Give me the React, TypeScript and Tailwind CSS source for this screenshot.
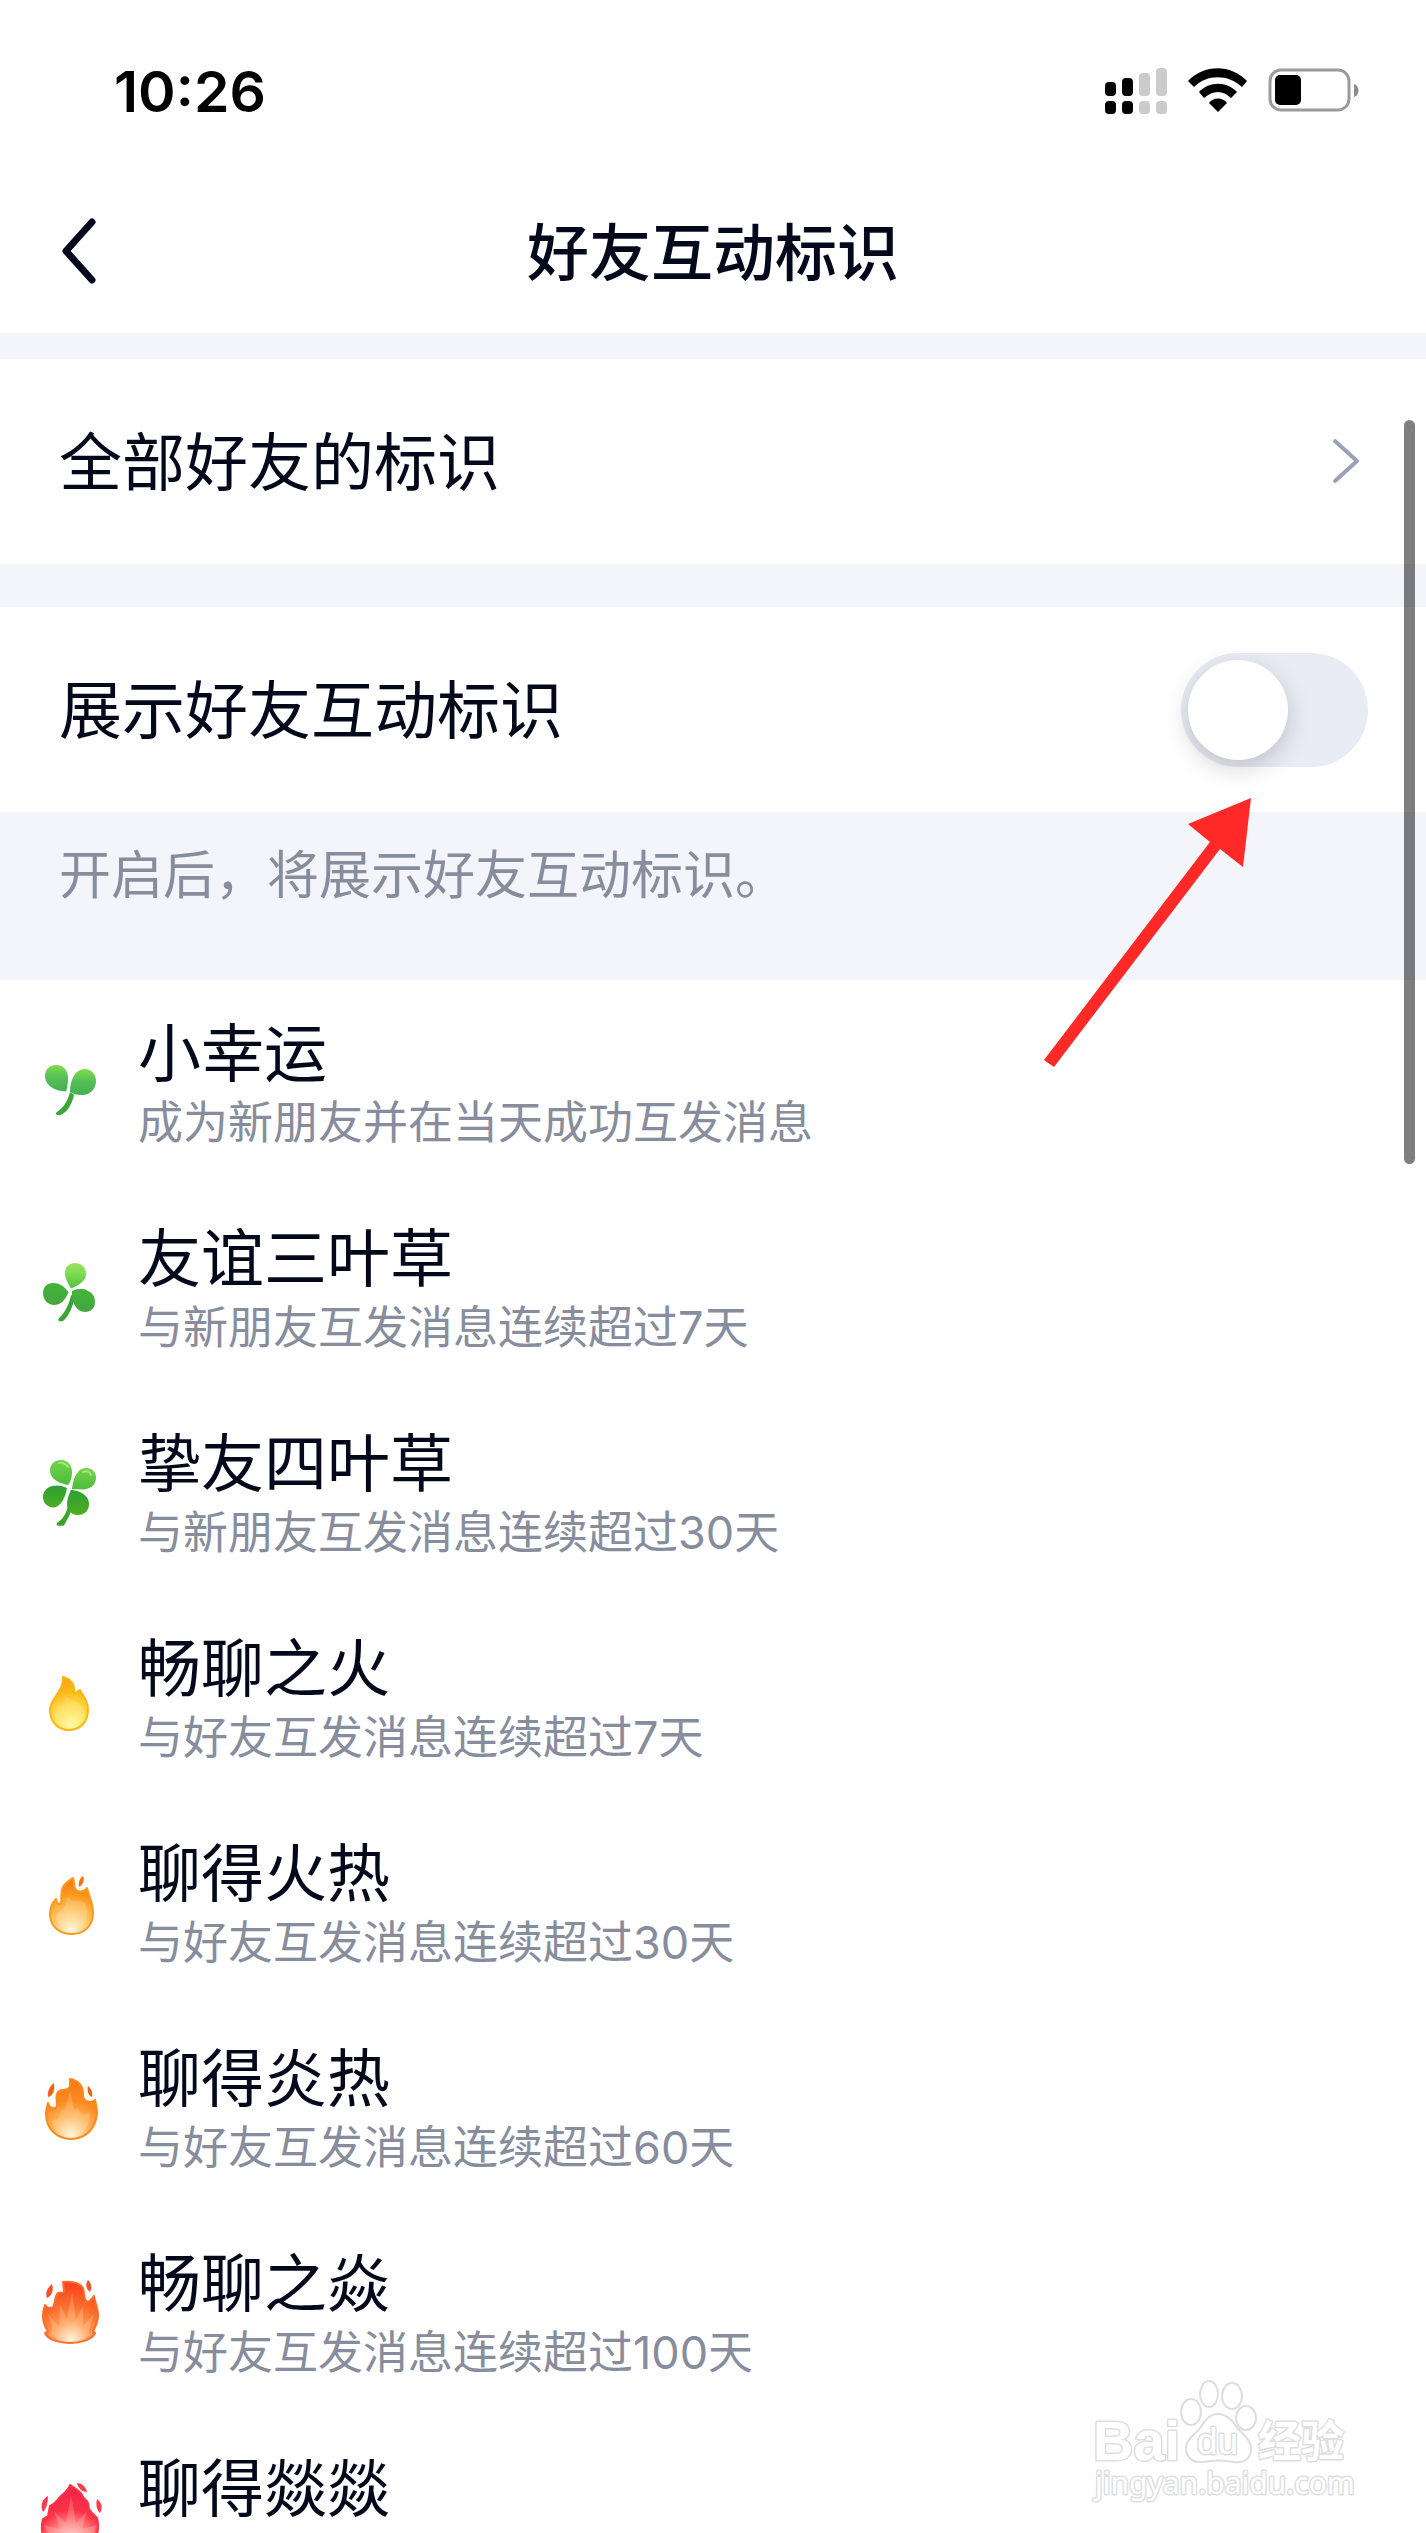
import { useState } from "react"
import type { ReactNode } from "react"

interface Badge {
  id: string
  name: string
  description?: string
  icon: ReactNode
}

function SproutIcon() {
  return (
    <svg viewBox="0 0 80 80" className="size-20" aria-hidden="true">
      <defs>
        <linearGradient id="sprout" x1="0" y1="0" x2="0" y2="1">
          <stop offset="0" stopColor="#7fdc4a" />
          <stop offset="0.5" stopColor="#55be58" />
          <stop offset="1" stopColor="#43b04f" />
        </linearGradient>
      </defs>
      <path d="M40 52C38 61 33 68 27 72C25 73 26 76 30 75C37 73 42 64 44 55Z" fill="#3da535" />
      <path d="M36 51.500C24 51 15 45 15 36C15 29 20 25 26 25C34 25 38 31 38 38C38 43 37.500 47 36 51.500Z" fill="url(#sprout)" />
      <path d="M40 52C40 40 45 29 55 29C61 29 66 34 66 41C66 49 60 55 52 55C47 55 43 54 40 52Z" fill="url(#sprout)" />
    </svg>
  )
}

function ThreeLeafIcon() {
  return (
    <svg viewBox="0 0 80 80" className="size-20" aria-hidden="true">
      <defs>
        <linearGradient id="leafTop" x1="0" y1="0" x2="0" y2="1">
          <stop offset="0" stopColor="#9be267" />
          <stop offset="0.400" stopColor="#7fdc50" />
          <stop offset="1" stopColor="#53c03e" />
        </linearGradient>
        <linearGradient id="leafSide" x1="0" y1="0" x2="0" y2="1">
          <stop offset="0" stopColor="#43b53a" />
          <stop offset="1" stopColor="#44a63e" />
        </linearGradient>
      </defs>
      <path d="M41 50C39 60 34 69 29 73C27 76 30 77 33 76C39 71 43 61 45 52Z" fill="#3da535" />
      <path d="M41 43.500C37 37 35 33 35 28C35 22 39 18 45 18C52 18 56 23 56 29C56 36 49 40 41 43.500Z" fill="url(#leafTop)" />
      <path d="M38.500 47C34 41 29 38 23 38C17 38 13 42 13 48C13 55 18 60 24 60C31 60 36 54 38.500 47Z" fill="url(#leafSide)" />
      <path d="M42 46C49 43 54 43 58 46C63 48 65 52 65 57C65 63 61 67 55 67C47 67 41 58 42 46Z" fill="url(#leafSide)" />
    </svg>
  )
}

function FourLeafIcon() {
  return (
    <svg viewBox="0 0 80 80" className="size-20" aria-hidden="true">
      <defs>
        <linearGradient id="cloverLight" x1="0" y1="0" x2="0" y2="1">
          <stop offset="0" stopColor="#74d24a" />
          <stop offset="1" stopColor="#4dbd3b" />
        </linearGradient>
        <linearGradient id="cloverDark" x1="0" y1="0" x2="0" y2="1">
          <stop offset="0" stopColor="#2c9f35" />
          <stop offset="1" stopColor="#4cae1f" />
        </linearGradient>
      </defs>
      <path d="M39 50C38 62 33 69 27 73C25 76 30 76 34 75.500C38 68 42 62 43 52Z" fill="#3aa528" />
      <path d="M38 35C27 33 20 28 20 20C20 14 25 10 31 10C38 10 42 16 42 22C42 27 41 31 38 35Z" fill="url(#cloverLight)" />
      <path d="M42 39C43 27 48 18 56 18C62 18 66 22 66 28C66 35 60 39 53 39.500Z" fill="url(#cloverLight)" />
      <path d="M37 38C31 35 27 35 22 36C16 38 13 42 13 47C13 53 17 57 23 57.500C31 57 35 48 37 38Z" fill="url(#cloverDark)" />
      <path d="M41 40C47 40 59 44 59 54C59 61 54 65 48 65C41 65 37 60 37 54C37 49 39 44 41 40Z" fill="url(#cloverDark)" />
      <path d="M29 13C33 12 36 14 38 17" stroke="#a6e77d" strokeWidth="2" strokeLinecap="round" fill="none" />
      <path d="M53 22C57 20 60 22 61 25" stroke="#a6e77d" strokeWidth="2" strokeLinecap="round" fill="none" />
    </svg>
  )
}

interface FlameIconProps {
  id: string
  body: string
  sparks?: string
  sparkColor?: string
  rays?: string
  core: string
  mid: string
  edge: string
  top: string
}

function FlameIcon({ id, body, sparks, sparkColor, rays, core, mid, edge, top }: FlameIconProps) {
  return (
    <svg viewBox="0 0 80 80" className="size-20" aria-hidden="true">
      <defs>
        <radialGradient id={`${id}-fill`} gradientUnits="userSpaceOnUse" cx="41" cy="70" r="54">
          <stop offset="0" stopColor={core} />
          <stop offset="0.350" stopColor={mid} />
          <stop offset="0.650" stopColor={edge} />
          <stop offset="1" stopColor={top} />
        </radialGradient>
      </defs>
      <path d={body} fill={`url(#${id}-fill)`} stroke={edge} strokeWidth="2" strokeLinejoin="round" />
      {rays && <path d={rays} fill={core} opacity="0.200" />}
      {sparks && <path d={sparks} fill={sparkColor} />}
    </svg>
  )
}

const badges: Badge[] = [
  { id: "luck", name: "小幸运", description: "成为新朋友并在当天成功互发消息", icon: <SproutIcon /> },
  { id: "clover3", name: "友谊三叶草", description: "与新朋友互发消息连续超过7天", icon: <ThreeLeafIcon /> },
  { id: "clover4", name: "挚友四叶草", description: "与新朋友互发消息连续超过30天", icon: <FourLeafIcon /> },
  {
    id: "fire1",
    name: "畅聊之火",
    description: "与好友互发消息连续超过7天",
    icon: (
      <FlameIcon
        id="fire1"
        body="M33 22C41 24 45 29 44 38C46 38 48 36 50 35C52 40 58 44 58 55C58 67 50 75 39 75C28 75 20 67 20 55C20 43 34 37 33 22Z"
        rays="M25 56C29 48 36 48 36 40C40 48 50 43 53 55C54 65 48 72 39 72C30 72 24 65 25 56Z"
        core="#fff9a6"
        mid="#ffdc52"
        edge="#fdb515"
        top="#fb9d12"
      />
    ),
  },
  {
    id: "fire2",
    name: "聊得火热",
    description: "与好友互发消息连续超过30天",
    icon: (
      <FlameIcon
        id="fire2"
        body="M26 39C26 42 28 45 31 44C32 40 30 34 33 27C36 22 40 20 43 18C45 22 43 27 46 30C50 33 55 31 57 28C58 34 63 41 63 53C63 66 54 74 42 74C29 74 20 66 20 54C20 48 22 43 26 39Z"
        sparks="M53 16C55 20 53 25 49 27C48 22 50 18 53 16Z"
        rays="M26 56C32 50 36 46 38 36C41 44 47 40 54 42C60 51 57 70 42 71C32 71 26 64 26 56Z"
        sparkColor="#f7701a"
        core="#fff6d6"
        mid="#ffc766"
        edge="#fb9a1e"
        top="#f66f10"
      />
    ),
  },
  {
    id: "fire3",
    name: "聊得炎热",
    description: "与好友互发消息连续超过60天",
    icon: (
      <FlameIcon
        id="fire3"
        body="M18 38C19 42 22 44 26 43C29 37 24 32 28 27C32 23 38 27 40 21L40 14C48 15 53 21 53 28C52 34 56 37 60 37C63 37 64 36 65 35C66 39 67 43 67 48C66 64 55 74 41 74C27 74 16 64 16 49C16 44 17 41 18 38Z"
        sparks="M24 18C25 25 23 31 18 32C17 26 20 21 24 18ZM58 21C62 24 63 29 62 32C58 30 57 26 58 21Z"
        rays="M22 56C26 54 30 56 31 44C35 50 37 36 40 26C44 38 42 50 48 42C50 52 58 50 60 46C60 64 52 71 41 71C31 71 24 65 22 56Z"
        sparkColor="#f1601a"
        core="#fff6dc"
        mid="#ffb45c"
        edge="#fb8a1d"
        top="#f87a17"
      />
    ),
  },
  {
    id: "fire4",
    name: "畅聊之焱",
    description: "与好友互发消息连续超过100天",
    icon: (
      <FlameIcon
        id="fire4"
        body="M15 35C17 38 20 39 23 37C26 33 24 27 28 23C30 22 34 24 34 21L33 12C42 11 49 12 53 18C55 23 53 29 57 32C61 32 62 28 64 26C65 33 68 38 68 45C68 52 66 56 63 61L65 63C62 70 50 73 40 73C30 73 18 70 15 63L18 61C14 56 13 51 13 46C13 41 14 38 15 35Z"
        sparks="M22 14C24 20 22 26 17 28C15 23 17 18 22 14ZM58 10C62 14 62 18 60 22C56 19 55 14 58 10Z"
        rays="M20 65C25 58 19 50 18 44L29 56L30 34L37 50L42 22L46 50L53 36L53 56L64 44C62 52 58 60 60 65C50 72 30 72 20 65Z"
        sparkColor="#f4532d"
        core="#fff5e0"
        mid="#ff9a52"
        edge="#fb6d2c"
        top="#f9461c"
      />
    ),
  },
  {
    id: "fire5",
    name: "聊得燚燚",
    icon: (
      <FlameIcon
        id="fire5"
        body="M40 10C44 13 51 16 53 22C55 25 57 25 58 28L59 34L62 38L67 43C70 55 66 68 58 73L22 73C13 67 10 55 13 44L18 41L20 31C24 29 27 26 30 22C33 19 38 16 40 10Z"
        sparks="M18 21C18 29 16 34 13 37C10 31 12 24 18 21ZM47 8C52 8 56 12 57 17C52 17 48 13 47 8ZM67 24C72 28 73 33 70 38C66 34 66 29 67 24Z"
        rays="M14 50L30 54L24 36L36 48L41 20L46 48L57 36L52 54L67 50L58 72L24 72Z"
        sparkColor="#fb3b50"
        core="#fff1ef"
        mid="#ff8f88"
        edge="#fb3347"
        top="#f42548"
      />
    ),
  },
]

function StatusBar() {
  return (
    <div className="flex h-[170px] items-center justify-between pt-3 pr-[66px] pl-[114px]">
      <time className="text-[57px] leading-none font-semibold text-black">10:26</time>
      <div className="flex items-center gap-5">
        <svg viewBox="0 0 64 46" className="h-[46px] w-16" aria-label="信号">
          <g fill="#000">
            <rect x="1" y="14" width="11" height="14" rx="4" />
            <rect x="18" y="10" width="11" height="18" rx="4" />
            <rect x="1" y="33" width="11" height="13" rx="4" />
            <rect x="18" y="33" width="11" height="13" rx="4" />
          </g>
          <g fill="#cbcbcb">
            <rect x="35" y="5" width="11" height="23" rx="4" />
            <rect x="52" y="0" width="11" height="28" rx="4" />
            <rect x="35" y="33" width="11" height="13" rx="4" />
            <rect x="52" y="33" width="11" height="13" rx="4" />
          </g>
        </svg>
        <svg viewBox="0 0 60 46" className="h-[46px] w-[60px]" aria-label="无线网络">
          <path d="M0 13C16 -4 43 -4 59 13L54 19C40 6 19 6 6 19Z" />
          <path d="M11 24C21 13 39 13 49 24L43 30C35 22 25 22 16 30Z" />
          <path d="M21 35C25 29 35 29 39 35L30 44Z" />
        </svg>
        <svg viewBox="0 0 92 46" className="h-[46px] w-[92px]" aria-label="电池">
          <rect x="2" y="2" width="79" height="40" rx="11" fill="none" stroke="#9b9b9b" strokeWidth="3" />
          <rect x="7" y="7" width="26" height="30" rx="5" />
          <path d="M86 16C92 18 92 27 86 29Z" fill="#8c8c8c" />
        </svg>
      </div>
    </div>
  )
}

function NavBar() {
  return (
    <header className="grid h-[163px] grid-cols-[1fr_auto_1fr] items-center px-[58px]">
      <button type="button" aria-label="返回" className="justify-self-start">
        <svg viewBox="0 0 42 68" className="h-[68px] w-[42px]" fill="none" stroke="#03081a" strokeWidth="7">
          <path d="M34 4L8 33L34 62" strokeLinecap="round" strokeLinejoin="round" />
        </svg>
      </button>
      <h1 className="pt-1 text-[62px] leading-[72px] font-medium">好友互动标识</h1>
    </header>
  )
}

function Watermark() {
  return (
    <svg viewBox="0 0 270 140" className="absolute right-[71px] bottom-[16px] h-[140px] w-[270px]" aria-label="Baidu经验">
      <g fill="#fff" stroke="#dedede" strokeWidth="2" strokeLinejoin="round">
        <ellipse cx="106" cy="35" rx="10" ry="13" />
        <ellipse cx="124" cy="17" rx="9" ry="13" />
        <ellipse cx="147" cy="19" rx="10" ry="13" />
        <ellipse cx="161" cy="41" rx="10" ry="12" />
        <path d="M133 37C143 37 148 45 153 52C160 59 167 65 166 73C165 83 158 86 149 85C139 83 128 83 119 85C108 86 101 81 101 71C101 62 110 58 116 50C121 42 125 37 133 37Z" />
      </g>
      <g fill="#fff" stroke="#dedede" strokeWidth="3" paintOrder="stroke" strokeLinejoin="round">
        <text x="8" y="83" className="font-['Liberation_Sans',sans-serif] text-[56px] font-bold">Bai</text>
        <text x="112" y="77" className="font-['Liberation_Sans',sans-serif] text-[37px]">du</text>
        <text x="173" y="80" className="font-['Noto_Sans_CJK_SC',sans-serif] text-[43px] font-bold">经验</text>
        <text x="10" y="117" className="font-['Noto_Sans',sans-serif] text-[30px]">jingyan.baidu.com</text>
      </g>
    </svg>
  )
}

export default function App() {
  const [showBadges, setShowBadges] = useState(false)

  return (
    <div className="relative h-screen overflow-hidden bg-white font-['Inter','Noto_Sans_CJK_SC',sans-serif] text-[#03081a]">
      <StatusBar />
      <NavBar />

      <main className="bg-[#f4f5fa] pt-[26px]">
        <a href="#all" className="flex h-[205px] items-center justify-between bg-white pr-[65px] pl-[59px]">
          <span className="text-[63px] leading-[72px]">全部好友的标识</span>
          <svg viewBox="0 0 30 48" className="h-12 w-[30px]" fill="none" stroke="#9aa1b9" strokeWidth="4">
            <path d="M4 3L26 23L4 43" strokeLinecap="round" strokeLinejoin="round" />
          </svg>
        </a>

        <section className="relative mt-[43px]">
          <div className="flex h-[205px] items-center justify-between bg-white pr-[58px] pl-[59px]">
            <label htmlFor="show-badges" className="text-[63px] leading-[72px]">
              展示好友互动标识
            </label>
            <input
              id="show-badges"
              type="checkbox"
              role="switch"
              checked={showBadges}
              onChange={(e) => setShowBadges(e.target.checked)}
              className="h-[114px] w-[187px] appearance-none rounded-full bg-[#e9ecf4] p-[7px] before:block before:size-[100px] before:rounded-full before:bg-white before:shadow-[0_8px_24px_rgba(0,0,0,0.18)] checked:bg-[#12b7f5] checked:before:ml-[73px]"
            />
          </div>
          <p className="h-[168px] px-[59px] pt-8 text-[52px] leading-[64px] text-[#888d9d]">
            开启后，将展示好友互动标识。
          </p>
          {/* Pointer to the switch */}
          <svg viewBox="0 0 208 270" className="absolute top-[191px] right-[174px] h-[270px] w-[208px]" aria-hidden="true">
            <path d="M0 262L166 44L144 26L207 0L199 69L176 51L10 269Z" fill="#ff2a28" />
          </svg>
        </section>

        <ul className="bg-white">
          {badges.map((badge) => (
            <li key={badge.id} className="flex h-[205px] gap-7 pl-[30px]">
              <div className="shrink-0 pt-[60px]">{badge.icon}</div>
              <div className="pt-[39px]">
                <h2 className="text-[63px] leading-[68px]">{badge.name}</h2>
                {badge.description && (
                  <p className="mt-1.5 text-[45px] leading-[60px] text-[#888d9d]">{badge.description}</p>
                )}
              </div>
            </li>
          ))}
        </ul>
      </main>

      {/* Scroll indicator */}
      <div className="absolute top-[420px] right-[11px] h-[744px] w-[11px] rounded-full bg-black/50" />
      <Watermark />
    </div>
  )
}
